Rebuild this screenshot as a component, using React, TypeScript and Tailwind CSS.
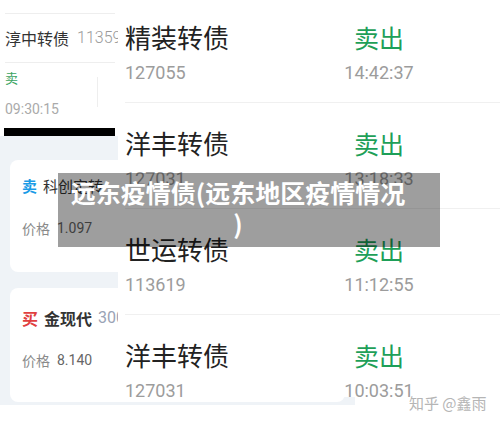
import React from "react";

type Trade = { name: string; code: string; side: string; time: string };

const trades: Trade[] = [
  { name: "精装转债", code: "127055", side: "卖出", time: "14:42:37" },
  { name: "洋丰转债", code: "127031", side: "卖出", time: "13:18:33" },
  { name: "世运转债", code: "113619", side: "卖出", time: "11:12:55" },
  { name: "洋丰转债", code: "127031", side: "卖出", time: "10:03:51" },
];

const cjk = "font-['Noto_Sans_CJK_SC','Noto_Sans',sans-serif]";
const num = "font-['Roboto','Noto_Sans_CJK_SC',sans-serif]";

function BackScreen() {
  return (
    <div className={`absolute left-0 top-0 w-[355px] h-[405px] bg-white flex flex-col ${cjk}`}>
      <div className="h-[128px] pl-[5px] pt-[13px] flex flex-col">
        <div className="w-[110px] border-t border-[#eeeeee]" />
        <div className="h-[49px] flex items-center gap-[8px] border-b border-[#eeeeee] w-[110px] whitespace-nowrap">
          <span className="text-[16px] text-[#333333]">淳中转债</span>
          <span className={`${num} text-[16px] font-light text-[#9a9a9a]`}>113591</span>
        </div>
        <div className="flex">
          <div className="w-[92px]">
            <div className="mt-[6px] text-[13px] leading-[18px] text-[#3aa35f]">卖</div>
            <div className={`${num} mt-[12px] text-[14px] leading-[20px] text-[#aaaaaa]`}>09:30:15</div>
          </div>
          <div className="mt-[14px] h-[30px] border-l border-[#eeeeee]" />
        </div>
      </div>
      <div className="ml-[4px] w-[111px] h-[8px] bg-black" />
      <div className="h-[269px] bg-[#eff3f7] px-[10px] pt-[24px] flex flex-col gap-[16px]">
        <div className="h-[112px] rounded-lg bg-white px-[12px] pt-[16px] whitespace-nowrap">
          <div className="flex items-center gap-[6px] text-[15px] leading-[20px]">
            <span className="font-bold text-[#1a9be6]">卖</span>
            <span className="text-[#333333]">科创定转</span>
          </div>
          <div className="mt-[22px] flex items-center gap-[7px] text-[14px] leading-[20px]">
            <span className="text-[#8a8a8a]">价格</span>
            <span className={`${num} text-[#666666]`}>1.097</span>
          </div>
        </div>
        <div className="h-[114px] rounded-lg bg-white px-[12px] pt-[20px] whitespace-nowrap">
          <div className="flex items-center gap-[6px] text-[16px] leading-[20px]">
            <span className="font-bold text-[#e04040]">买</span>
            <span className="font-bold text-[#333333]">金现代</span>
            <span className={`${num} text-[#9aa3b5]`}>300830</span>
          </div>
          <div className="mt-[22px] flex items-center gap-[7px] text-[14px] leading-[20px]">
            <span className="text-[#8a8a8a]">价格</span>
            <span className={`${num} text-[#666666]`}>8.140</span>
          </div>
        </div>
      </div>
    </div>
  );
}

function TradeList() {
  return (
    <div className={`absolute left-[118px] top-0 right-0 h-[397px] bg-white overflow-hidden pl-[7px] ${cjk}`}>
      <div className="-mt-[3px]">
        {trades.map((t, i) => (
          <div key={i} className="h-[106px] border-b border-[#f0f0f0] flex">
            <div className="flex-1 pt-[24px]">
              <div className="text-[26px] leading-[32px] text-[#222222]">{t.name}</div>
              <div className={`${num} mt-[8px] text-[18px] leading-[24px] text-[#9c9c9c]`}>{t.code}</div>
            </div>
            <div className="w-[110px] mr-[66px] pt-[24px] text-center">
              <div className="text-[25px] leading-[32px] text-[#1e9f58]">{t.side}</div>
              <div className={`${num} mt-[8px] text-[18px] leading-[24px] text-[#9c9c9c]`}>{t.time}</div>
            </div>
          </div>
        ))}
      </div>
    </div>
  );
}

export default function App() {
  return (
    <div className="relative w-[500px] h-[422px] bg-white overflow-hidden">
      <BackScreen />
      <TradeList />
      <div className={`absolute left-[58px] top-[173px] w-[382px] h-[74px] bg-black/[0.38] pl-[12px] pt-[4px] ${cjk}`}>
        <div className="w-[336px] text-center text-[25px] leading-[31px] font-bold text-white">
          远东疫情债(远东地区疫情情况
          <br />)
        </div>
      </div>
      <div className={`absolute left-[409px] top-[393px] text-[15px] leading-[20px] text-[#b5b5b5] [text-shadow:0_0_2px_#fff] ${cjk}`}>
        知乎 @鑫雨
      </div>
    </div>
  );
}
